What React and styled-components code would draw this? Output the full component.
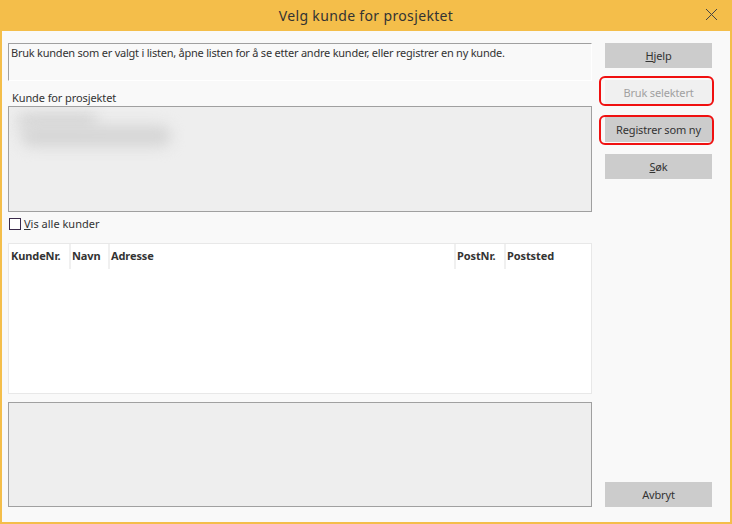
import React from "react";
import styled, { createGlobalStyle } from "styled-components";

const Global = createGlobalStyle`
  html, body { margin: 0; padding: 0; background: #f9f9f9; }
  body { font-family: "Noto Sans", "Open Sans", sans-serif; color: #333; }
  * { box-sizing: border-box; }
`;

const Window = styled.div`
  width: 732px;
  height: 524px;
  border: 2px solid #f4be4a;
  border-top: none;
  background: #f9f9f9;
  display: flex;
  flex-direction: column;
`;

const TitleBar = styled.div`
  height: 31px;
  background: #f4be4a;
  display: flex;
  align-items: center;
  justify-content: center;
  position: relative;
  font-size: 14px;
  letter-spacing: 0.35px;
  color: #333;
`;

const CloseBtn = styled.div`
  position: absolute;
  right: 12px;
  top: 8px;
  width: 13px;
  height: 13px;
  display: flex;
`;

const Body = styled.div`
  flex: 1;
  display: flex;
  padding: 12px 18px 15px 6px;
  gap: 13px;
`;

const LeftColumn = styled.div`
  width: 584px;
  display: flex;
  flex-direction: column;
`;

const InfoBox = styled.div`
  height: 38px;
  border-top: 1px solid #a0a0a0;
  border-left: 1px solid #a0a0a0;
  border-right: 1px solid #fff;
  border-bottom: 1px solid #fff;
  padding: 2px 2px;
  font-size: 11px;
  line-height: 14px;
  letter-spacing: -0.23px;
`;

const Label = styled.div`
  font-size: 11px;
  line-height: 14px;
  margin: 10px 0 1px 4px;
  letter-spacing: -0.1px;
`;

const GrayBox = styled.div`
  background: #eeeeee;
  border: 1px solid #a0a0a0;
  height: ${(p) => p.$h}px;
  position: relative;
  overflow: hidden;
`;

const Blur = styled.div`
  position: absolute;
  left: ${(p) => p.$x}px;
  top: ${(p) => p.$y}px;
  width: ${(p) => p.$w}px;
  height: ${(p) => p.$h}px;
  background: #d6d6d6;
  border-radius: 10px;
  filter: blur(7px);
`;

const CheckRow = styled.label`
  display: flex;
  align-items: center;
  gap: 3px;
  margin: 5px 0 0 1px;
  font-size: 11px;
  line-height: 14px;
  height: 14px;
`;

const CheckBox = styled.span`
  width: 12px;
  height: 12px;
  border: 1px solid #3a2a4a;
  background: #fff;
`;

const U = styled.span`
  text-decoration: underline;
`;

const Table = styled.div`
  margin-top: 12px;
  height: 151px;
  background: #fff;
  border: 1px solid #e8e8e8;
  display: grid;
  grid-template-columns: 62px 39px 346px 50px 1fr;
  grid-template-rows: 25px;
  align-content: start;
`;

const Th = styled.div`
  font-size: 11px;
  font-weight: 700;
  letter-spacing: -0.1px;
  padding: ${(p) => (p.$first ? "4px 0 0 2px" : "4px 0 0 1px")};
  border-right: ${(p) => (p.$last ? "none" : "2px solid #f0f0f0")};
`;

const BottomBox = styled(GrayBox)`
  margin-top: 8px;
`;

const RightColumn = styled.div`
  width: 107px;
  display: flex;
  flex-direction: column;
  gap: 12px;
`;

const Spacer = styled.div`
  flex: 1;
`;

const Button = styled.div`
  position: relative;
  height: 25px;
  background: ${(p) => (p.$disabled ? "#f0f0f0" : "#cccccc")};
  color: ${(p) => (p.$disabled ? "#a0a0a0" : "#333")};
  font-size: 11px;
  letter-spacing: -0.15px;
  display: flex;
  align-items: center;
  justify-content: center;
`;

const Highlight = styled.div`
  position: absolute;
  left: -6px;
  right: -2px;
  top: ${(p) => p.$t}px;
  bottom: ${(p) => p.$b}px;
  border: 2px solid #f01010;
  border-radius: 6px;
`;

export default function App() {
  return (
    <>
      <Global />
      <Window>
        <TitleBar>
          Velg kunde for prosjektet
          <CloseBtn>
            <svg width="13" height="13" viewBox="0 0 13 13">
              <path d="M1 1 L12 12 M12 1 L1 12" stroke="#444" strokeWidth="1" />
            </svg>
          </CloseBtn>
        </TitleBar>
        <Body>
          <LeftColumn>
            <InfoBox>
              Bruk kunden som er valgt i listen, åpne listen for å se etter andre kunder, eller registrer en ny kunde.
            </InfoBox>
            <Label>Kunde for prosjektet</Label>
            <GrayBox $h={106}>
              <Blur $x={8} $y={6} $w={80} $h={16} />
              <Blur $x={12} $y={18} $w={150} $h={22} />
            </GrayBox>
            <CheckRow>
              <CheckBox />
              <span>
                <U>V</U>is alle kunder
              </span>
            </CheckRow>
            <Table>
              <Th $first>KundeNr.</Th>
              <Th>Navn</Th>
              <Th>Adresse</Th>
              <Th>PostNr.</Th>
              <Th $last>Poststed</Th>
            </Table>
            <BottomBox $h={105} />
          </LeftColumn>
          <RightColumn>
            <Button>
              <span>
                <U>H</U>jelp
              </span>
            </Button>
            <Button $disabled>
              Bruk selektert
              <Highlight $t={-4} $b={-1} />
            </Button>
            <Button>
              Registrer som ny
              <Highlight $t={-2} $b={-3} />
            </Button>
            <Button>
              <span>
                <U>S</U>øk
              </span>
            </Button>
            <Spacer />
            <Button>Avbryt</Button>
          </RightColumn>
        </Body>
      </Window>
    </>
  );
}
